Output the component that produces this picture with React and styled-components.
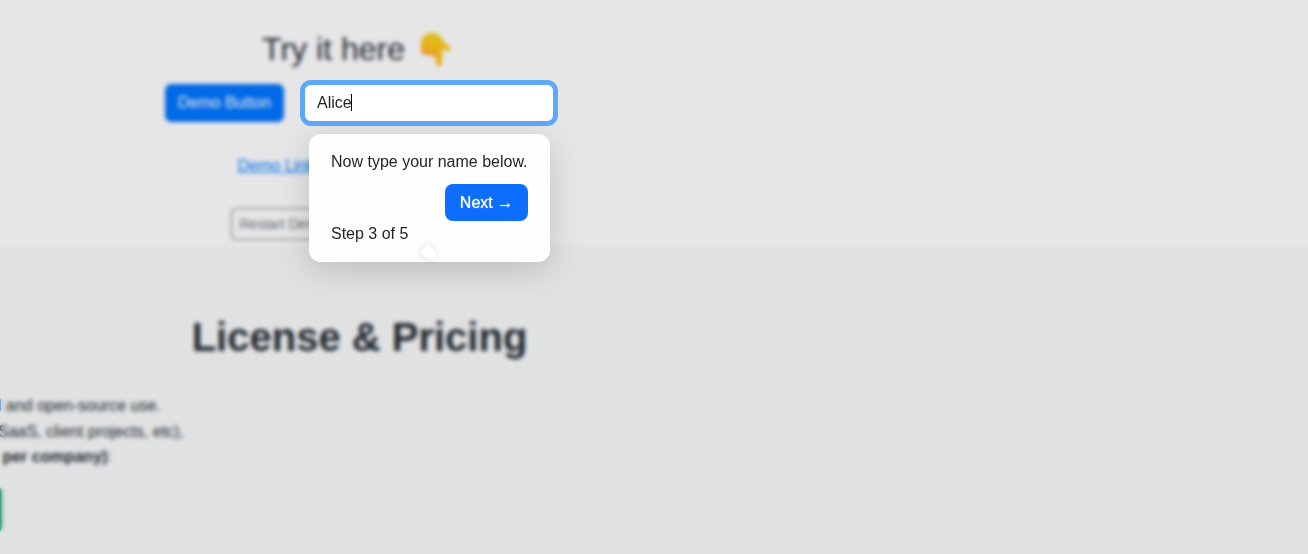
import React from "react";
import styled, { createGlobalStyle } from "styled-components";

const GlobalStyle = createGlobalStyle`
  *, *::before, *::after { box-sizing: border-box; }
  body {
    margin: 0;
    background: #f9fbfa;
    color: #252c34;
    font-family: "Liberation Sans", Arial, sans-serif;
    font-size: 16px;
    line-height: 24px;
  }
  button, input { font: inherit; }
`;

const Page = styled.div`
  display: flex;
  flex-direction: column;
  min-height: 100vh;
`;

const DemoSection = styled.section`
  background: #fff;
  padding: 30px 0 6px;
`;

const Column = styled.div`
  max-width: 719px;
  display: flex;
  flex-direction: column;
  align-items: center;
`;

const Title = styled.h2`
  display: flex;
  align-items: center;
  gap: 12px;
  margin: 0 0 16px;
  font-size: 32px;
  line-height: 38px;
  font-weight: 400;
`;

const Hand = styled.svg`
  width: 40px;
  height: 36px;
`;

const ControlRow = styled.div`
  display: flex;
  align-items: flex-end;
  gap: 20px;
`;

const Row = styled.div`
  display: flex;
  width: 100%;
  max-width: ${(p) => p.$width}px;
  margin-top: ${(p) => p.$top}px;
`;

const Button = styled.button`
  width: 119px;
  height: 38px;
  padding: 0;
  border: 1px solid #0075ff;
  border-radius: 6px;
  background: #0075ff;
  color: #fff;
`;

const OutlineButton = styled.button`
  height: 32px;
  padding: 0 8px;
  border: 1px solid #6c757d;
  border-radius: 4px;
  background: transparent;
  color: #6c757d;
  font-size: 14px;
`;

const Link = styled.a`
  color: #0080ff;
`;

const Field = styled.div`
  position: relative;
  z-index: 2;
  color: #212529;
`;

const NameInput = styled.input`
  display: block;
  width: 250px;
  height: 38px;
  padding: 0 12px;
  border: 1px solid #5ea9f7;
  border-radius: 7px;
  outline: none;
  box-shadow: 0 0 0 4px #5ea9f7;
  background: #fff;
  color: #212529;
`;

const Caret = styled.span`
  position: absolute;
  top: 10px;
  left: 47px;
  width: 1px;
  height: 17px;
  background: #000;
`;

const Popover = styled.div`
  position: absolute;
  top: 50px;
  left: 5px;
  width: 241px;
  padding: 16px 22px;
  border-radius: 12px;
  background: rgba(255, 255, 255, 0.96);
  backdrop-filter: blur(6px);
  box-shadow: 0 8px 32px rgba(0, 0, 0, 0.16);
`;

const Message = styled.p`
  margin: 0;
  white-space: nowrap;
`;

const Actions = styled.div`
  display: flex;
  justify-content: flex-end;
  margin: 10px 0 1px;
`;

const NextButton = styled.button`
  width: 83px;
  height: 37px;
  padding: 0;
  border: 0;
  border-radius: 8px;
  background: #0d6efd;
  color: #fff;
  text-shadow: 0 0 1px #fff;
  white-space: nowrap;
`;

const Pointer = styled.svg`
  position: absolute;
  bottom: 2px;
  left: 111px;
  width: 16px;
  height: 16px;
  filter: drop-shadow(-1px 0 3px rgba(0, 0, 0, 0.14));
`;

const Backdrop = styled.div`
  position: fixed;
  inset: 0;
  z-index: 1;
  pointer-events: none;
  background: rgba(5, 10, 15, 0.1);
  backdrop-filter: blur(2px);
`;

const PricingSection = styled.section`
  flex: 1;
  overflow: hidden;
  padding: 67px 0 22px;
`;

const PricingTitle = styled.h2`
  margin: 0 0 32px;
  font-size: 40px;
  line-height: 48px;
`;

const Terms = styled.p`
  margin: 0 0 16px -2px;
  line-height: 1.6;
  white-space: pre;
`;

const BuyButton = styled.button`
  display: block;
  width: 200px;
  height: 47px;
  margin-left: -198px;
  border: 0;
  border-radius: 6px;
  background: #10a365;
`;

export default function App() {
  return (
    <Page>
      <GlobalStyle />
      <DemoSection>
        <Column>
          <Title>
            Try it here
            <Hand viewBox="0 0 40 36" role="img" aria-label="pointing down">
              <defs>
                <linearGradient id="skin" x1="0.7" y1="0" x2="0.3" y2="1">
                  <stop offset="0" stopColor="#f7d81f" />
                  <stop offset="0.6" stopColor="#ffc01d" />
                  <stop offset="1" stopColor="#ffa32a" />
                </linearGradient>
              </defs>
              <path d="M4 14C4 6 8 2 15 2c7 0 10 4 12 9l6 5c2 2 0 5-3 4l-5-2v14c0 4-6 4-6 0V25L8 23c-4 0-5-4-4-9Z" fill="url(#skin)" />
              <path d="M4 19c3 2 9 2 15 4v3c-3 0-5-2-7-2-4 0-8-1-8-5Z" fill="#ff9a35" />
              <path d="M19 22v10c0 3 6 3 6 0V19Z" fill="#ffc216" />
            </Hand>
          </Title>
          <ControlRow>
            <Button type="button">Demo Button</Button>
            <Field>
              <NameInput aria-label="Your name" defaultValue="Alice" />
              <Caret />
              <Popover role="dialog" aria-label="Tour step">
                <Message>Now type your name below.</Message>
                <Actions>
                  <NextButton type="button">Next →</NextButton>
                </Actions>
                <Message>Step 3 of 5</Message>
                <Pointer viewBox="0 0 16 16" aria-hidden="true">
                  <path d="M8 0l3 3h2v2l3 3v8H8l-3-3H3v-2l-3-3 3-3V3h2Z" fill="#fff" />
                </Pointer>
              </Popover>
            </Field>
          </ControlRow>
          <Row $width={244} $top={32}>
            <Link href="#demo">Demo Link</Link>
          </Row>
          <Row $width={258} $top={30}>
            <OutlineButton type="button">Restart Demo</OutlineButton>
          </Row>
        </Column>
      </DemoSection>
      <PricingSection>
        <Column>
          <PricingTitle>License &amp; Pricing</PricingTitle>
        </Column>
        <Terms>
          l and open-source use.
          <br />
          SaaS, client projects, etc),
          <br />
          <strong>{"\u00a0per company)"}</strong>:
        </Terms>
        <BuyButton type="button" aria-label="Buy a license" />
      </PricingSection>
      <Backdrop />
    </Page>
  );
}
